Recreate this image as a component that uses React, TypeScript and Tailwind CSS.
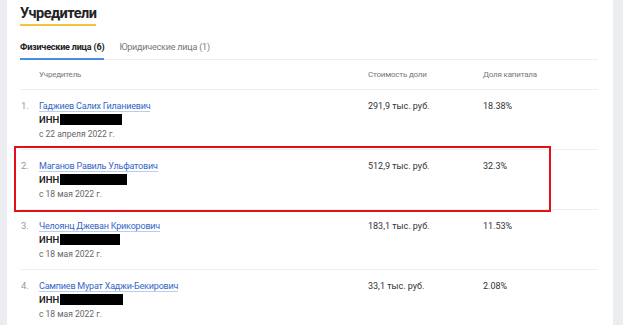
import React from "react";

type Row = { n: number; name: string; date: string; value: string; pct: string; inn: number };

const rows: Row[] = [
  { n: 1, name: "Гаджиев Салих Гиланиевич", date: "с 22 апреля 2022 г.", value: "291,9 тыс. руб.", pct: "18.38%", inn: 62 },
  { n: 2, name: "Маганов Равиль Ульфатович", date: "с 18 мая 2022 г.", value: "512,9 тыс. руб.", pct: "32.3%", inn: 67 },
  { n: 3, name: "Челоянц Джеван Крикорович", date: "с 18 мая 2022 г.", value: "183,1 тыс. руб.", pct: "11.53%", inn: 60 },
  { n: 4, name: "Сампиев Мурат Хаджи-Бекирович", date: "с 18 мая 2022 г.", value: "33,1 тыс. руб.", pct: "2.08%", inn: 63 },
];

export default function App() {
  return (
    <div
      className="flex h-[325px] w-[623px] overflow-hidden bg-[#ebedf1]"
      style={{ fontFamily: "Roboto, 'Noto Sans', sans-serif" }}
    >
      <div className="ml-[7px] w-[606px] shrink-0 bg-white pl-[13px] pr-[15px]">
        <div className="flex pt-[5px]">
          <div className="border-b-2 border-[#f3c33f] pb-[1px] text-[14.5px] font-bold leading-[18px] tracking-[-0.5px] text-[#222]">
            Учредители
          </div>
        </div>
        <div className="mt-[14px] flex border-b border-[#efefef] text-[9px] leading-[14px] tracking-[-0.2px]">
          <div className="-mb-px border-b-2 border-[#4a8ee0] pb-[4px] font-bold text-[#222]">Физические лица (6)</div>
          <div className="ml-[15px] pb-[4px] text-[#777]">Юридические лица (1)</div>
        </div>
        <div className="flex h-[30px] items-center border-b border-[#efefef] text-[8px] tracking-[-0.2px] text-[#777]">
          <div className="w-[348px] pl-[19px]">Учредитель</div>
          <div className="w-[115px]">Стоимость доли</div>
          <div>Доля капитала</div>
        </div>
        {rows.map((r) => (
          <div key={r.n} className="relative flex h-[60px] border-b border-[#efefef] pt-[9px]">
            {r.n === 2 && (
              <div className="pointer-events-none absolute left-[-6px] top-[-4px] h-[66px] w-[537px] border-2 border-[#e3101b]" />
            )}
            <div className="w-[19px] pl-[1px] text-[9.5px] leading-[14px] text-[#999]">{r.n}.</div>
            <div className="w-[329px]">
              <div className="text-[9px] leading-[14px] tracking-[-0.2px]">
                <span className="border-b border-[#b8cdf0] text-[#3566c5]">{r.name}</span>
              </div>
              <div className="flex items-center text-[9.5px] leading-[13px] text-[#222]">
                <span className="font-semibold">ИНН</span>
                <span className="ml-[1px] inline-block h-[11px] bg-black" style={{ width: r.inn }} />
              </div>
              <div className="mt-[2px] text-[8.5px] leading-[12px] text-[#666]">{r.date}</div>
            </div>
            <div className="w-[115px] text-[9px] leading-[14px] text-[#333]">{r.value}</div>
            <div className="text-[9px] leading-[14px] text-[#333]">{r.pct}</div>
          </div>
        ))}
      </div>
    </div>
  );
}
